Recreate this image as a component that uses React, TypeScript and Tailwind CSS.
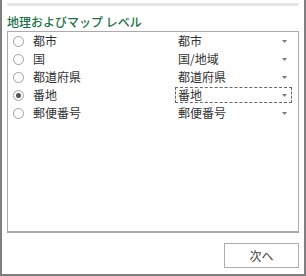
import React from 'react';

const levels = [
  { label: '都市', value: '都市' },
  { label: '国', value: '国/地域' },
  { label: '都道府県', value: '都道府県' },
  { label: '番地', value: '番地' },
  { label: '郵便番号', value: '郵便番号' },
];

const Arrow = () => (
  <svg width="5" height="3" viewBox="0 0 5 3" className="shrink-0">
    <path d="M0 0H5L2.5 3Z" fill="#7a7a7a" />
  </svg>
);

export default function App() {
  const selected = 3;

  return (
    <div
      className="w-[306px] h-[276px] bg-white border-l-2 border-r-2 border-b-2 border-[#7f7f7f] px-[5px] pt-[3px] flex flex-col"
      style={{ fontFamily: '"Noto Sans CJK JP", "Noto Sans", sans-serif' }}
    >
      {/* Top separator */}
      <div className="h-[3px] bg-[#e6e6e6]" />

      {/* Title */}
      <div className="mt-[8px] h-[17px] text-[12px] leading-[16px] font-medium text-[#217346]">
        地理およびマップ レベル
      </div>

      {/* List */}
      <div className="h-[202px] border border-[#ababab] border-b-2 border-b-[#a8a8a8]">
        {levels.map((lv, i) => (
          <div key={lv.label} className="h-[18px] flex items-center text-[12px] text-[#333]">
            <div className="ml-[5px] w-[11px] h-[11px] rounded-full border border-[#a0a0a0] flex items-center justify-center shrink-0">
              {i === selected && <div className="w-[5px] h-[5px] rounded-full bg-[#555]" />}
            </div>
            <span className="ml-[9px] w-[142px] leading-[18px]">{lv.label}</span>
            <div
              className={`w-[117px] h-[16px] flex items-center justify-between pl-[2px] pr-[4px] ${
                i === selected ? 'border border-dashed border-[#666]' : 'border border-transparent'
              }`}
            >
              <span className="leading-[14px]">{lv.value}</span>
              <Arrow />
            </div>
          </div>
        ))}
      </div>

      {/* Footer */}
      <div className="flex justify-end mt-[10px]">
        <button className="w-[75px] h-[25px] border border-[#adadad] bg-white text-[12px] text-[#444] flex items-center justify-center">
          次へ
        </button>
      </div>
    </div>
  );
}
